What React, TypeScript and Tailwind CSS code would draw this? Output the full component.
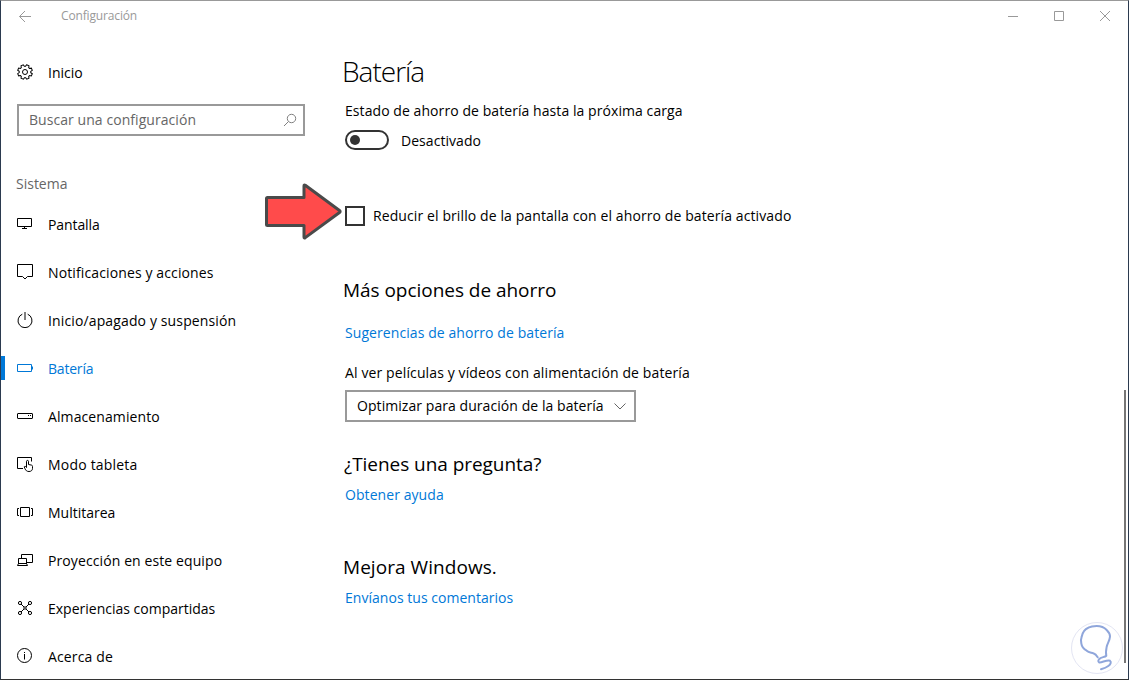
import type { ReactNode } from "react";

interface NavItem {
  label: string;
  icon: ReactNode;
  tracking: string;
  active?: boolean;
}

// all menu icons share the same 16px grid
function Icon({ children }: { children: ReactNode }) {
  return (
    <svg
      className="size-4 shrink-0"
      viewBox="0 0 16 16"
      fill="none"
      stroke="currentColor"
    >
      {children}
    </svg>
  );
}

const items: NavItem[] = [
  {
    label: "Pantalla",
    tracking: "tracking-[-0.1px]",
    icon: <path d="M.5 2.5h14v8H.5zM7.5 10.5v2M5 12.5h5" />,
  },
  {
    label: "Notificaciones y acciones",
    tracking: "tracking-[0.12px]",
    icon: <path d="M.5.5h15v12h-5L8 15l-2.5-2.5h-5z" />,
  },
  {
    label: "Inicio/apagado y suspensión",
    tracking: "tracking-[0.13px]",
    icon: <path d="M8 0v8M5.3 2.2a7 7 0 1 0 5.4 0" />,
  },
  {
    label: "Batería",
    tracking: "tracking-[-0.2px]",
    active: true,
    icon: <path d="M.5 4.5h14v7H.5zM15.5 6.5v3" />,
  },
  {
    label: "Almacenamiento",
    tracking: "tracking-[0.1px]",
    icon: (
      <>
        <rect x=".5" y="5.5" width="15" height="5" rx=".5" />
        <path d="M11 7.5h1M13 7.5h1" />
      </>
    ),
  },
  {
    label: "Modo tableta",
    tracking: "tracking-[0.2px]",
    icon: (
      <path d="M6 12.5H.5v-11h14v4M9.5 11.5V5.3c0-1.2 2-1.2 2 0v3.200l3 .6c.7.2 1 .6 1 1.300v2c0 2-1.500 3.100-3.500 3.100-2.200 0-3.200-1-4-2.700l-.8-2c.6-.8 1.600-.5 2.300.7z" />
    ),
  },
  {
    label: "Multitarea",
    tracking: "tracking-normal",
    icon: <path d="M3.5 3.5h9v9h-9zM2 4.5H.5v7H2M14 4.5h1.5v7H14" />,
  },
  {
    label: "Proyección en este equipo",
    tracking: "tracking-[0.1px]",
    icon: <path d="M4.5 6V2.5h11v8H10M1.5 12V6.5h8V12M.5 13.5l1-2h8l1 2z" />,
  },
  {
    label: "Experiencias compartidas",
    tracking: "tracking-normal",
    icon: (
      <>
        <circle cx="3" cy="3" r="1.6" />
        <circle cx="13" cy="3" r="1.6" />
        <circle cx="3" cy="13" r="1.6" />
        <circle cx="13" cy="13" r="1.6" />
        <circle cx="8" cy="8" r="1.2" />
        <path d="m4 4 3 3M12 4 9 7M4 12l3-3M12 12 9 9" />
      </>
    ),
  },
  {
    label: "Acerca de",
    tracking: "tracking-[0.15px]",
    icon: (
      <>
        <circle cx="7.5" cy="7.5" r="7" />
        <path d="M7.5 6v5.5M7.5 4v1" />
      </>
    ),
  },
];

function TitleBar() {
  return (
    <header className="flex h-[30px] shrink-0 items-center text-[#999]">
      <svg
        className="ml-[18px] h-3 w-3"
        viewBox="0 0 12 12"
        fill="none"
        stroke="currentColor"
      >
        <path d="M12 6.5H.5M6 1 .5 6.5 6 12" />
      </svg>
      <span className="ml-[30px] flex-1 text-[12px] leading-4 tracking-[-0.15px]">
        Configuración
      </span>
      <svg
        className="mr-[18px] h-[10px] w-[102px]"
        viewBox="0 0 102 10"
        fill="none"
        stroke="currentColor"
      >
        <path d="M0 5.5h10M46.5.5h9v9h-9zM92 0l10 10M102 0 92 10" />
      </svg>
    </header>
  );
}

function Sidebar() {
  return (
    <aside className="w-[328px] shrink-0">
      <div className="flex h-[82px] items-center gap-[15px] pl-4">
        <Icon>
          <circle cx="8" cy="8" r="2.5" />
          <path
            transform="rotate(22.5 8 8)"
            d="M6.7.7h2.6l.4 1.8 1.1.5 1.6-1 1.7 1.7-1 1.6.5 1.1 1.8.4v2.4l-1.8.4-.5 1.1 1 1.6-1.7 1.7-1.6-1-1.1.5-.4 1.8H6.7l-.4-1.8-1.1-.5-1.6 1-1.7-1.7 1-1.6-.5-1.1-1.8-.4V6.8l1.8-.4.5-1.1-1-1.6L3.6 2l1.6 1 1.1-.5z"
          />
        </Icon>
        <span>Inicio</span>
      </div>
      <div className="-mt-[9px] ml-4 flex h-8 w-72 items-center justify-between border-2 border-[#999] pr-[6px] pl-[10px] text-[#666]">
        <span className="pb-0.5 tracking-[0.06px]">
          Buscar una configuración
        </span>
        <svg
          className="size-[14px]"
          viewBox="0 0 14 14"
          fill="none"
          stroke="#808080"
        >
          <circle cx="8.5" cy="5.5" r="4.2" />
          <path d="M5.5 8.5 1 13" />
        </svg>
      </div>
      <h2 className="mt-[37px] ml-[15px] h-[22px] leading-[22px] text-[#666]">
        Sistema
      </h2>
      <nav className="mt-[5px]">
        {items.map((e) => (
          <a
            key={e.label}
            className={`flex h-12 items-center ${e.active ? "text-[#0078d7]" : ""}`}
          >
            <span className={`h-6 w-1 ${e.active ? "bg-[#0078d7]" : ""}`} />
            <span className="mr-[15px] ml-3">
              <Icon>{e.icon}</Icon>
            </span>
            <span className={e.tracking}>{e.label}</span>
          </a>
        ))}
      </nav>
    </aside>
  );
}

function Content() {
  return (
    <main className="flex-1 pl-4">
      <h1 className="mt-[22px] -ml-[3px] h-9 text-[28px] leading-9 font-light tracking-[-1px]">
        Batería
      </h1>
      <p className="mt-3 leading-5 tracking-[0.07px]">
        Estado de ahorro de batería hasta la próxima carga
      </p>
      <div className="mt-[9px] flex h-5 items-center gap-3">
        <span className="flex h-5 w-11 items-center rounded-full border-2 border-[#333] pl-[3px]">
          <span className="size-[10px] rounded-full bg-[#333]" />
        </span>
        <span className="tracking-[0.05px]">Desactivado</span>
      </div>
      <div className="mt-14 flex h-5 items-center gap-2">
        <span className="size-5 border-2 border-[#333]" />
        <span className="pb-0.5 tracking-[0.1px]">
          Reducir el brillo de la pantalla con el ahorro de batería activado
        </span>
      </div>
      <h2 className="mt-[50px] -ml-[2px] h-7 text-[19px] leading-7 tracking-[-0.04px]">
        Más opciones de ahorro
      </h2>
      <a className="mt-[19px] block leading-5 tracking-[0.08px] text-[#0078d7]">
        Sugerencias de ahorro de batería
      </a>
      <p className="mt-5 leading-5 tracking-[0.12px]">
        Al ver películas y vídeos con alimentación de batería
      </p>
      <div className="mt-[7px] flex h-8 w-[291px] items-center justify-between border-2 border-[#999] pr-2 pl-[10px]">
        <span className="pb-0.5 tracking-[0.06px]">
          Optimizar para duración de la batería
        </span>
        <svg
          className="h-[7px] w-3"
          viewBox="0 0 12 7"
          fill="none"
          stroke="#666"
        >
          <path d="M.5.5 6 6 11.5.5" />
        </svg>
      </div>
      <h2 className="mt-7 -ml-px h-7 text-[19px] leading-7 tracking-[-0.05px]">
        ¿Tienes una pregunta?
      </h2>
      <a className="mt-[7px] block leading-5 tracking-[0.07px] text-[#0078d7]">
        Obtener ayuda
      </a>
      <h2 className="mt-12 -ml-[2px] h-7 text-[19px] leading-7 tracking-[0.05px]">
        Mejora Windows.
      </h2>
      <a className="mt-[7px] block leading-5 tracking-[0.03px] text-[#0078d7]">
        Envíanos tus comentarios
      </a>
    </main>
  );
}

export default function App() {
  return (
    <div className="relative flex h-[680px] w-[1129px] flex-col overflow-hidden border border-[#2b3a4f] border-t-[#999] border-b-[#333] bg-white font-['Open_Sans',sans-serif] text-[14px] text-black">
      <TitleBar />
      <div className="flex flex-1">
        <Sidebar />
        <Content />
      </div>

      {/* scrollbar */}
      <div className="absolute top-[389px] right-[2px] h-[273px] w-[2px] bg-[#767676]" />

      {/* pointer to the checkbox */}
      <svg
        className="absolute top-[181px] left-[262px] h-[60px] w-[82px]"
        viewBox="0 0 82 60"
        fill="#ff4b4b"
        stroke="#4a4a4a"
        strokeWidth="3"
        strokeLinejoin="round"
      >
        <path d="M4.5 15.5H41V4q0-1.5 1.3-.7L76.5 28.5q1.3 1 0 2L42.3 55.6Q41 56.4 41 55V43.5H4.5q-1 0-1-1v-26q0-1 1-1z" />
      </svg>

      {/* bulb watermark */}
      <svg
        className="absolute top-[620px] left-[1069px] size-[54px]"
        viewBox="0 0 54 54"
        fill="none"
      >
        <circle cx="27" cy="27" r="25.5" fill="#fff" stroke="#e3e5f3" />
        <path
          d="M27.7 36.3c-1.2-2-2.5-3.4-4.4-4-2.3-.8-4.6-.8-6.6-2.6-3-1.7-5-4.400-5.400-7.400-.5-2.600-.4-4.600.4-6.600C12.500 11.500 15 8 18.300 6.700 21 5.200 23.700 5 26.700 5c4 0 7.500 1.300 10 4 2 2 3.500 4.200 3.300 6.700-.3 4-2.600 6.600-3.300 10-.6 3.200-1.200 6-.4 9-1.500 1.600-5.300 1.300-7 3.300-1.200 1.500-1.300 2.600-.3 3.300 2 .9 8-2.800 11-1.600 1.800 1.300.3 3.800-1.700 5.300-2 1.500-4.700 2.500-7.300 3.300"
          stroke="#8fa6db"
          strokeWidth="2"
          strokeLinecap="round"
          strokeLinejoin="round"
        />
      </svg>
    </div>
  );
}
